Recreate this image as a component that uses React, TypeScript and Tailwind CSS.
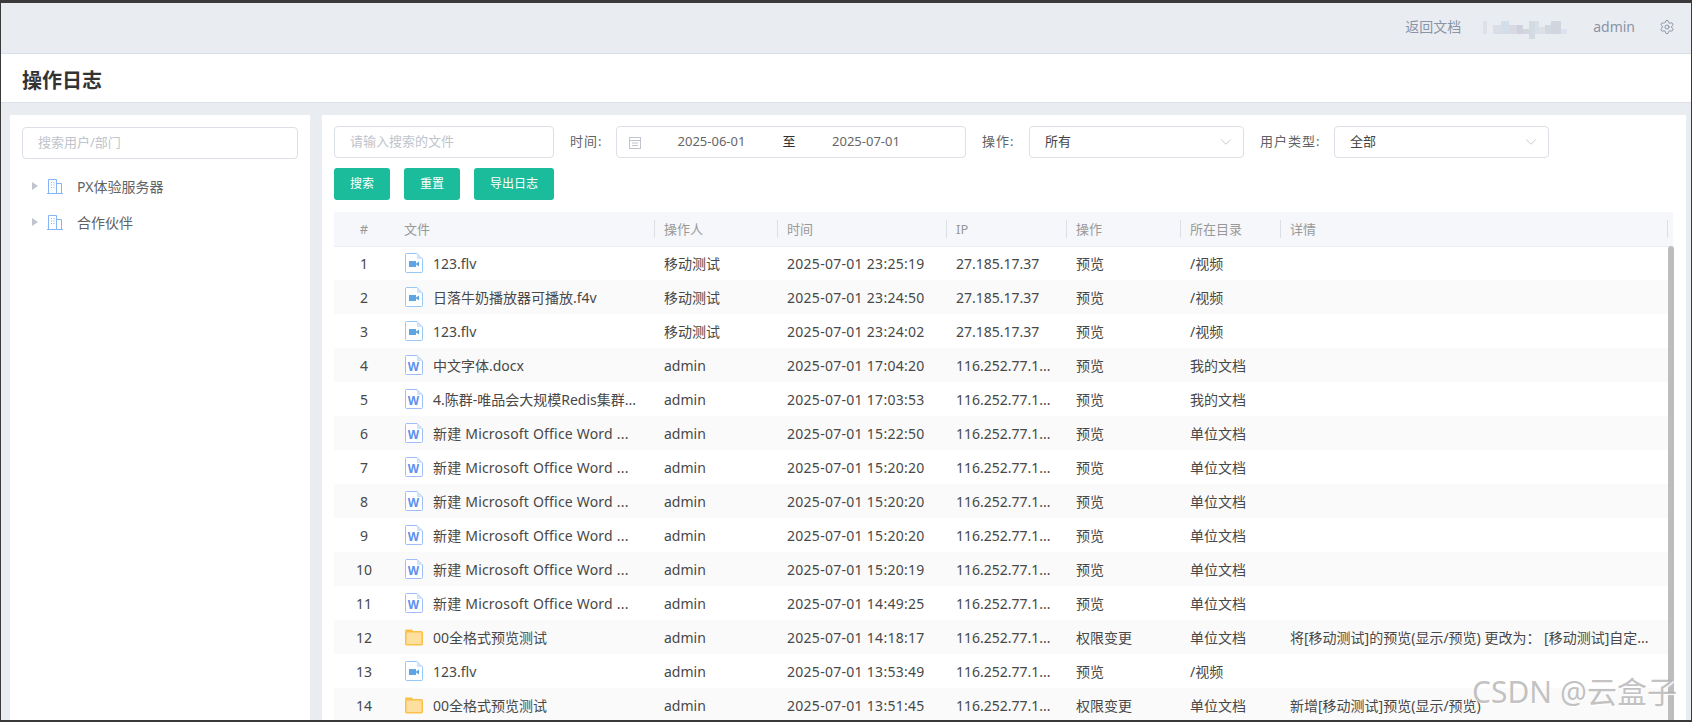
import { ChevronDown, Settings } from 'lucide-react';

type Kind = 'video' | 'word' | 'folder';

interface LogRow {
  kind: Kind;
  file: string;
  user: string;
  time: string;
  ip: string;
  action: string;
  dir: string;
  detail?: string;
}

const WORD_NAME = '新建 Microsoft Office Word ...';
const LONG_IP = '116.252.77.1...';

const rows: LogRow[] = [
  { kind: 'video', file: '123.flv', user: '移动测试', time: '2025-07-01 23:25:19', ip: '27.185.17.37', action: '预览', dir: '/视频' },
  { kind: 'video', file: '日落牛奶播放器可播放.f4v', user: '移动测试', time: '2025-07-01 23:24:50', ip: '27.185.17.37', action: '预览', dir: '/视频' },
  { kind: 'video', file: '123.flv', user: '移动测试', time: '2025-07-01 23:24:02', ip: '27.185.17.37', action: '预览', dir: '/视频' },
  { kind: 'word', file: '中文字体.docx', user: 'admin', time: '2025-07-01 17:04:20', ip: LONG_IP, action: '预览', dir: '我的文档' },
  { kind: 'word', file: '4.陈群-唯品会大规模Redis集群...', user: 'admin', time: '2025-07-01 17:03:53', ip: LONG_IP, action: '预览', dir: '我的文档' },
  { kind: 'word', file: WORD_NAME, user: 'admin', time: '2025-07-01 15:22:50', ip: LONG_IP, action: '预览', dir: '单位文档' },
  { kind: 'word', file: WORD_NAME, user: 'admin', time: '2025-07-01 15:20:20', ip: LONG_IP, action: '预览', dir: '单位文档' },
  { kind: 'word', file: WORD_NAME, user: 'admin', time: '2025-07-01 15:20:20', ip: LONG_IP, action: '预览', dir: '单位文档' },
  { kind: 'word', file: WORD_NAME, user: 'admin', time: '2025-07-01 15:20:20', ip: LONG_IP, action: '预览', dir: '单位文档' },
  { kind: 'word', file: WORD_NAME, user: 'admin', time: '2025-07-01 15:20:19', ip: LONG_IP, action: '预览', dir: '单位文档' },
  { kind: 'word', file: WORD_NAME, user: 'admin', time: '2025-07-01 14:49:25', ip: LONG_IP, action: '预览', dir: '单位文档' },
  { kind: 'folder', file: '00全格式预览测试', user: 'admin', time: '2025-07-01 14:18:17', ip: LONG_IP, action: '权限变更', dir: '单位文档', detail: '将[移动测试]的预览(显示/预览) 更改为： [移动测试]自定...' },
  { kind: 'video', file: '123.flv', user: 'admin', time: '2025-07-01 13:53:49', ip: LONG_IP, action: '预览', dir: '/视频' },
  { kind: 'folder', file: '00全格式预览测试', user: 'admin', time: '2025-07-01 13:51:45', ip: LONG_IP, action: '权限变更', dir: '单位文档', detail: '新增[移动测试]预览(显示/预览)' },
];

const mosaic: [number, number, number, number, string][] = [
  [0, 0, 4, 13, '#dfe1e8'],
  [10, 4, 8, 9, '#dadfe7'],
  [18, 0, 8, 13, '#d4deea'],
  [26, 4, 8, 9, '#d8d9e2'],
  [34, 4, 6, 9, '#cfd1dc'],
  [40, 8, 6, 5, '#d2d5de'],
  [46, 0, 6, 18, '#d2dae2'],
  [52, 0, 4, 13, '#d8e0e7'],
  [56, 6, 6, 7, '#dde1e7'],
  [62, 4, 6, 9, '#d2d8e2'],
  [68, 0, 10, 13, '#d0d5de'],
  [78, 8, 6, 5, '#dde2ee'],
];

function FileIcon({ kind }: { kind: Kind }) {
  if (kind === 'folder') {
    return (
      <svg width="18" height="20" viewBox="0 0 18 20" className="shrink-0">
        <path d="M0 3.5a1 1 0 0 1 1-1h6l1.5 2H0z" fill="#fbc04a" />
        <rect x="0.75" y="4.75" width="16.5" height="13" rx="1" fill="#ffdf9e" stroke="#fbc04a" strokeWidth="1.5" />
      </svg>
    );
  }
  const stroke = kind === 'video' ? '#97c9f7' : '#9fbdf9';
  return (
    <svg width="18" height="20" viewBox="0 0 18 20" className="shrink-0">
      <path d="M1.5.5h10.5l5.5 5.5v12.5a1 1 0 0 1-1 1h-15a1 1 0 0 1-1-1v-17a1 1 0 0 1 1-1z" fill="#fff" stroke={stroke} />
      <path d="M12 .5v5.5h5.5z" fill="#cfe3fb" />
      {kind === 'video' ? (
        <path d="M4 8h7v6H4zM11 10.5l3-2v5l-3-2z" fill="#5ea6e2" />
      ) : (
        <text x="8.5" y="16" textAnchor="middle" fontSize="12" fontWeight="700" fill="#5b8ff0" fontFamily="Liberation Sans, sans-serif">
          W
        </text>
      )}
    </svg>
  );
}

function BuildingIcon() {
  return (
    <svg width="16" height="15" viewBox="0 0 16 15" fill="none" stroke="#85b5f5" className="shrink-0">
      <path d="M0 14.5h16M1.5 14.5V.5h8v14M9.5 4.5h5v10" />
      <path d="M4 3.5h1M6.5 3.5h1M4 6h1M6.5 6h1M4 8.5h1M6.5 8.5h1" strokeDasharray="1 1" />
    </svg>
  );
}

function TreeItem({ label }: { label: string }) {
  return (
    <div className="flex h-9 items-center pl-[10px] text-[14px] text-[#606266]">
      <svg width="6" height="8" viewBox="0 0 6 8" className="shrink-0">
        <path d="M0 0l6 4-6 4z" fill="#c0c4cc" />
      </svg>
      <span className="ml-[9px]">
        <BuildingIcon />
      </span>
      <span className="ml-[14px]">{label}</span>
    </div>
  );
}

function Select({ value, width }: { value: string; width: string }) {
  return (
    <div className={`flex h-8 items-center justify-between rounded border border-[#dcdfe6] pl-[15px] pr-[8px] text-[13px] text-[#444] ${width}`}>
      <span>{value}</span>
      <ChevronDown size={18} strokeWidth={1} className="text-[#b4b8c0]" />
    </div>
  );
}

function App() {
  const headers = ['#', '文件', '操作人', '时间', 'IP', '操作', '所在目录', '详情'];
  return (
    <div className="relative flex h-[722px] w-[1692px] flex-col overflow-hidden border-x border-t-[3px] border-b-2 border-[#3a3a3a] bg-[#e9edf2] font-['Noto_Sans','Noto_Sans_CJK_SC',sans-serif]">
      <div className="flex h-[51px] shrink-0 items-center justify-end border-b border-[#d8e0ea] pb-[3px] pr-[16px] text-[14px] text-[#8a94a6]">
        <span>返回文档</span>
        <svg width="88" height="18" viewBox="0 0 88 18" className="ml-[22px] mt-[6px]">
          {mosaic.map(([x, y, w, h, fill], i) => (
            <rect key={i} x={x} y={y} width={w} height={h} fill={fill} />
          ))}
        </svg>
        <span className="ml-[22px]">admin</span>
        <Settings size={16} strokeWidth={1.5} className="ml-[24px]" />
      </div>

      <div className="flex h-[49px] shrink-0 items-center border-b border-[#dfe3e9] bg-white pl-[21px] pt-[6px] text-[20px] font-bold text-[#333]">
        操作日志
      </div>

      <div className="flex min-h-0 flex-1 gap-3 pl-[9px] pr-[5px] pt-3">
        <div className="w-[300px] shrink-0 bg-white px-3 pt-3">
          <div className="flex h-8 items-center rounded border border-[#dcdfe6] pl-[15px] text-[13px] text-[#c0c4cc]">
            搜索用户/部门
          </div>
          <div className="mt-[9px]">
            <TreeItem label="PX体验服务器" />
            <TreeItem label="合作伙伴" />
          </div>
        </div>

        <div className="min-w-0 flex-1 overflow-hidden bg-white pl-3 pr-[13px] pt-[11px]">
          <div className="flex items-center text-[13px] text-[#606266]">
            <div className="flex h-8 w-[220px] items-center rounded border border-[#dcdfe6] pl-[15px] text-[#c0c4cc]">
              请输入搜索的文件
            </div>
            <span className="w-[62px] pl-4 tracking-[1px]">时间:</span>
            <div className="flex h-8 w-[350px] items-center rounded border border-[#dcdfe6] pl-[11px] text-[#666]">
              <svg width="14" height="13" viewBox="0 0 14 13" fill="none" stroke="#c0c4cc" className="shrink-0">
                <rect x="1.5" y="1.5" width="11" height="11" />
                <path d="M1.5 4.5h11M4 7h6M4 9.5h6" />
              </svg>
              <span className="w-[139px] text-center">2025-06-01</span>
              <span className="w-[16px] text-center text-[#333]">至</span>
              <span className="w-[138px] text-center">2025-07-01</span>
            </div>
            <span className="w-[63px] pl-4 tracking-[1px]">操作:</span>
            <Select value="所有" width="w-[215px]" />
            <span className="w-[90px] pl-4 tracking-[1px]">用户类型:</span>
            <Select value="全部" width="w-[215px]" />
          </div>

          <div className="mt-[10px] flex gap-[14px] text-[12px] text-white">
            <button className="h-8 w-14 rounded-[3px] bg-[#1abc9c]">搜索</button>
            <button className="h-8 w-14 rounded-[3px] bg-[#1abc9c]">重置</button>
            <button className="h-8 w-20 rounded-[3px] bg-[#1abc9c]">导出日志</button>
          </div>

          <table className="mt-3 w-[1339px] table-fixed border-collapse text-left">
            <colgroup>
              <col className="w-[60px]" />
              <col className="w-[261px]" />
              <col className="w-[123px]" />
              <col className="w-[169px]" />
              <col className="w-[120px]" />
              <col className="w-[114px]" />
              <col className="w-[100px]" />
              <col className="w-[392px]" />
            </colgroup>
            <thead>
              <tr className="h-[34px] border-b border-[#ebeef5] bg-[#f5f7fa] text-[13px] text-[#999]">
                {headers.map((h, i) => (
                  <th key={h} className={`p-0 font-normal ${i === 0 ? 'text-center' : i === 1 ? 'pl-[10px]' : 'pl-[9px]'}`}>
                    <div className={`h-[18px] leading-[18px] ${i === 0 ? '' : 'border-r border-[#dcdfe6]'} ${i === 7 ? 'mr-[5px]' : ''}`}>{h}</div>
                  </th>
                ))}
              </tr>
            </thead>
            <tbody className="text-[14px] text-[#484848]">
              {rows.map((r, i) => (
                <tr key={i} className={`h-[34px] ${i % 2 === 1 ? 'bg-[#fafafa]' : 'bg-white'}`}>
                  <td className="p-0 text-center">{i + 1}</td>
                  <td className="p-0 pl-[11px]">
                    <div className="flex items-center gap-[10px]">
                      <FileIcon kind={r.kind} />
                      <span className={`whitespace-nowrap ${r.file === WORD_NAME ? 'tracking-[0.2px]' : ''}`}>{r.file}</span>
                    </div>
                  </td>
                  <td className="p-0 pl-[9px]">{r.user}</td>
                  <td className="p-0 pl-[9px] tracking-[0.28px]">{r.time}</td>
                  <td className="p-0 pl-[9px]">{r.ip}</td>
                  <td className="p-0 pl-[9px]">{r.action}</td>
                  <td className="p-0 pl-[9px]">{r.dir}</td>
                  <td className="whitespace-nowrap p-0 pl-[9px]">{r.detail}</td>
                </tr>
              ))}
            </tbody>
          </table>
        </div>
      </div>

      {/* scrollbar + watermark sit over the table */}
      <div className="absolute bottom-0 left-[1667px] top-[243px] w-[6px] rounded-t bg-[#bdbdbd]" />
      <div className="absolute bottom-[6px] left-[1471px] whitespace-nowrap text-[30px] text-[#a8a8a8]/70 [text-shadow:1px_1px_1px_#ffffff]">
        CSDN @云盒子
      </div>
    </div>
  );
}

export default App;
